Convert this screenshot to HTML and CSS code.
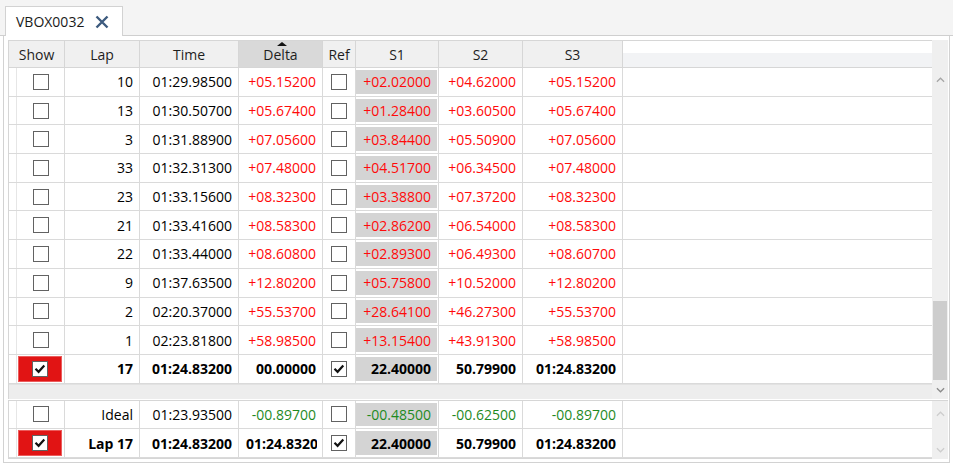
FILE: index.html
```html
<!DOCTYPE html>
<html lang="en">
<head>
    <meta charset="UTF-8">
    <meta name="viewport" content="width=device-width, initial-scale=1.0">
    <title>VBOX0032</title>
    <link rel="stylesheet" href="styles.css">
</head>
<body>
    <div class="tabstrip">
        <div class="tab">
            <span>VBOX0032</span>
            <svg class="tab-close" viewBox="0 0 14 14" width="14" height="14">
                <path d="M1.5 1.5 L12.5 12.5 M12.5 1.5 L1.5 12.5" stroke="#3d5a7e" stroke-width="2.4" fill="none"/>
            </svg>
        </div>
    </div>

    <div class="panel">
        <div class="section">
            <div class="grid">
                <div class="row head">
                    <div class="hcell">Show</div>
                    <div class="hcell">Lap</div>
                    <div class="hcell">Time</div>
                    <div class="hcell sorted">Delta<span class="sort-arrow"></span></div>
                    <div class="hcell">Ref</div>
                    <div class="hcell">S1</div>
                    <div class="hcell">S2</div>
                    <div class="hcell">S3</div>
                    <div class="hcell filler"></div>
                </div>

                <div class="row">
                    <div class="cell rh"></div>
                    <div class="cell center"><span class="cb"></span></div>
                    <div class="cell">10</div>
                    <div class="cell">01:29.98500</div>
                    <div class="cell red">+05.15200</div>
                    <div class="cell center"><span class="cb"></span></div>
                    <div class="cell s1"><span class="s1-box red">+02.02000</span></div>
                    <div class="cell red">+04.62000</div>
                    <div class="cell red">+05.15200</div>
                    <div class="cell filler"></div>
                </div>
                <div class="row">
                    <div class="cell rh"></div>
                    <div class="cell center"><span class="cb"></span></div>
                    <div class="cell">13</div>
                    <div class="cell">01:30.50700</div>
                    <div class="cell red">+05.67400</div>
                    <div class="cell center"><span class="cb"></span></div>
                    <div class="cell s1"><span class="s1-box red">+01.28400</span></div>
                    <div class="cell red">+03.60500</div>
                    <div class="cell red">+05.67400</div>
                    <div class="cell filler"></div>
                </div>
                <div class="row">
                    <div class="cell rh"></div>
                    <div class="cell center"><span class="cb"></span></div>
                    <div class="cell">3</div>
                    <div class="cell">01:31.88900</div>
                    <div class="cell red">+07.05600</div>
                    <div class="cell center"><span class="cb"></span></div>
                    <div class="cell s1"><span class="s1-box red">+03.84400</span></div>
                    <div class="cell red">+05.50900</div>
                    <div class="cell red">+07.05600</div>
                    <div class="cell filler"></div>
                </div>
                <div class="row">
                    <div class="cell rh"></div>
                    <div class="cell center"><span class="cb"></span></div>
                    <div class="cell">33</div>
                    <div class="cell">01:32.31300</div>
                    <div class="cell red">+07.48000</div>
                    <div class="cell center"><span class="cb"></span></div>
                    <div class="cell s1"><span class="s1-box red">+04.51700</span></div>
                    <div class="cell red">+06.34500</div>
                    <div class="cell red">+07.48000</div>
                    <div class="cell filler"></div>
                </div>
                <div class="row">
                    <div class="cell rh"></div>
                    <div class="cell center"><span class="cb"></span></div>
                    <div class="cell">23</div>
                    <div class="cell">01:33.15600</div>
                    <div class="cell red">+08.32300</div>
                    <div class="cell center"><span class="cb"></span></div>
                    <div class="cell s1"><span class="s1-box red">+03.38800</span></div>
                    <div class="cell red">+07.37200</div>
                    <div class="cell red">+08.32300</div>
                    <div class="cell filler"></div>
                </div>
                <div class="row">
                    <div class="cell rh"></div>
                    <div class="cell center"><span class="cb"></span></div>
                    <div class="cell">21</div>
                    <div class="cell">01:33.41600</div>
                    <div class="cell red">+08.58300</div>
                    <div class="cell center"><span class="cb"></span></div>
                    <div class="cell s1"><span class="s1-box red">+02.86200</span></div>
                    <div class="cell red">+06.54000</div>
                    <div class="cell red">+08.58300</div>
                    <div class="cell filler"></div>
                </div>
                <div class="row">
                    <div class="cell rh"></div>
                    <div class="cell center"><span class="cb"></span></div>
                    <div class="cell">22</div>
                    <div class="cell">01:33.44000</div>
                    <div class="cell red">+08.60800</div>
                    <div class="cell center"><span class="cb"></span></div>
                    <div class="cell s1"><span class="s1-box red">+02.89300</span></div>
                    <div class="cell red">+06.49300</div>
                    <div class="cell red">+08.60700</div>
                    <div class="cell filler"></div>
                </div>
                <div class="row">
                    <div class="cell rh"></div>
                    <div class="cell center"><span class="cb"></span></div>
                    <div class="cell">9</div>
                    <div class="cell">01:37.63500</div>
                    <div class="cell red">+12.80200</div>
                    <div class="cell center"><span class="cb"></span></div>
                    <div class="cell s1"><span class="s1-box red">+05.75800</span></div>
                    <div class="cell red">+10.52000</div>
                    <div class="cell red">+12.80200</div>
                    <div class="cell filler"></div>
                </div>
                <div class="row">
                    <div class="cell rh"></div>
                    <div class="cell center"><span class="cb"></span></div>
                    <div class="cell">2</div>
                    <div class="cell">02:20.37000</div>
                    <div class="cell red">+55.53700</div>
                    <div class="cell center"><span class="cb"></span></div>
                    <div class="cell s1"><span class="s1-box red">+28.64100</span></div>
                    <div class="cell red">+46.27300</div>
                    <div class="cell red">+55.53700</div>
                    <div class="cell filler"></div>
                </div>
                <div class="row">
                    <div class="cell rh"></div>
                    <div class="cell center"><span class="cb"></span></div>
                    <div class="cell">1</div>
                    <div class="cell">02:23.81800</div>
                    <div class="cell red">+58.98500</div>
                    <div class="cell center"><span class="cb"></span></div>
                    <div class="cell s1"><span class="s1-box red">+13.15400</span></div>
                    <div class="cell red">+43.91300</div>
                    <div class="cell red">+58.98500</div>
                    <div class="cell filler"></div>
                </div>
                <div class="row bold">
                    <div class="cell rh"></div>
                    <div class="cell center"><span class="show-on"><span class="cb checked"><svg viewBox="0 0 14 14"><path d="M2.5 6.8 L5.6 9.8 L11.3 3.6"/></svg></span></span></div>
                    <div class="cell">17</div>
                    <div class="cell">01:24.83200</div>
                    <div class="cell">00.00000</div>
                    <div class="cell center"><span class="cb checked"><svg viewBox="0 0 14 14"><path d="M2.5 6.8 L5.6 9.8 L11.3 3.6"/></svg></span></div>
                    <div class="cell s1"><span class="s1-box">22.40000</span></div>
                    <div class="cell">50.79900</div>
                    <div class="cell">01:24.83200</div>
                    <div class="cell filler"></div>
                </div>

                <div class="hscroll"></div>
            </div>

            <div class="vscroll">
                <svg class="arrow" viewBox="0 0 10 6"><path d="M1 5 L5 1 L9 5" stroke="#a6a6a6"/></svg>
                <div class="track"><div class="thumb"></div></div>
                <svg class="arrow" viewBox="0 0 10 6"><path d="M1 1 L5 5 L9 1" stroke="#8a8a8a"/></svg>
            </div>
        </div>

        <div class="section summary">
            <div class="grid">
                <div class="row">
                    <div class="cell rh"></div>
                    <div class="cell center"><span class="cb"></span></div>
                    <div class="cell">Ideal</div>
                    <div class="cell">01:23.93500</div>
                    <div class="cell green">-00.89700</div>
                    <div class="cell center"><span class="cb"></span></div>
                    <div class="cell s1"><span class="s1-box green">-00.48500</span></div>
                    <div class="cell green">-00.62500</div>
                    <div class="cell green">-00.89700</div>
                    <div class="cell filler"></div>
                </div>
                <div class="row bold">
                    <div class="cell rh"></div>
                    <div class="cell center"><span class="show-on"><span class="cb checked"><svg viewBox="0 0 14 14"><path d="M2.5 6.8 L5.6 9.8 L11.3 3.6"/></svg></span></span></div>
                    <div class="cell">Lap 17</div>
                    <div class="cell">01:24.83200</div>
                    <div class="cell clipped"><span>01:24.83200</span></div>
                    <div class="cell center"><span class="cb checked"><svg viewBox="0 0 14 14"><path d="M2.5 6.8 L5.6 9.8 L11.3 3.6"/></svg></span></div>
                    <div class="cell s1"><span class="s1-box">22.40000</span></div>
                    <div class="cell">50.79900</div>
                    <div class="cell">01:24.83200</div>
                    <div class="cell filler"></div>
                </div>
            </div>

            <div class="vscroll light">
                <svg class="arrow" viewBox="0 0 10 6"><path d="M1 5 L5 1 L9 5" stroke="#cdcdcd"/></svg>
                <div class="track"></div>
                <svg class="arrow" viewBox="0 0 10 6"><path d="M1 1 L5 5 L9 1" stroke="#cdcdcd"/></svg>
            </div>
        </div>
    </div>
</body>
</html>
```

FILE: styles.css
```css
body {
    margin: 0;
    font-family: "Open Sans", "Noto Sans", sans-serif;
    font-size: 14px;
    color: #000;
    background: #fff;
}

.tabstrip {
    height: 35px;
    padding-left: 5px;
    background: #f4f4f4;
    border-bottom: 1px solid #cfcfcf;
    display: flex;
    align-items: flex-end;
}

.tab {
    height: 29px;
    margin-bottom: -1px;
    padding: 0 13px 0 10px;
    display: flex;
    align-items: center;
    gap: 11px;
    background: #fff;
    border: 1px solid #d2d2d2;
    border-bottom: none;
    color: #1a1a1a;
}

.tab-close {
    display: block;
    margin-top: 1px;
}

.panel {
    margin: 0 3px;
    padding: 4px 1px 3px 4px;
    border: 1px solid #d2d2d2;
    border-top: none;
}

.section {
    display: flex;
}

.grid {
    flex: 1;
    border-left: 1px solid #d6d6d6;
}

.row {
    display: grid;
    grid-template-columns: 8px 48px 75px 99px 84px 33px 83px 84px 100px 1fr;
    height: 28.7px;
    box-sizing: border-box;
    border-bottom: 1px solid #dadada;
}

.row.head {
    grid-template-columns: 56px 75px 99px 84px 33px 83px 84px 100px 1fr;
    height: 28px;
    border-top: 1px solid #d6d6d6;
    border-bottom: 1px solid #d6d6d6;
    background: #f0f0f0;
}

.hcell {
    position: relative;
    display: flex;
    align-items: center;
    justify-content: center;
    border-right: 1px solid #d6d6d6;
    color: #1e1e1e;
}

.hcell.sorted {
    background: #d9d9d9;
}

.sort-arrow {
    position: absolute;
    top: 1px;
    left: 50%;
    margin-left: -4px;
    border-left: 5px solid transparent;
    border-right: 5px solid transparent;
    border-bottom: 4px solid #111;
}

.hcell.filler {
    border-right: none;
    background: linear-gradient(#fff 0, #fff 12px, #f2f3f5 12px);
}

.cell {
    display: flex;
    align-items: center;
    justify-content: flex-end;
    padding-right: 6px;
    border-right: 1px solid #dadada;
    white-space: nowrap;
    overflow: hidden;
}

.cell.rh {
    padding: 0;
    border-right: 1px solid #e6e6e6;
}

.cell.center {
    justify-content: center;
    padding: 0;
}

.cell.filler {
    border-right: none;
    padding: 0;
}

.cell.s1 {
    padding: 2px 1px 2px 0;
    align-items: stretch;
}

.s1-box {
    flex: 1;
    display: flex;
    align-items: center;
    justify-content: flex-end;
    padding-right: 6px;
    background: #d4d4d4;
}

.red {
    color: #ff0a0a;
}

.green {
    color: #1f8a1f;
}

.bold {
    font-weight: bold;
}

.cell.clipped {
    justify-content: flex-start;
    padding: 0 5px 0 7px;
}

.cell.clipped span {
    overflow: hidden;
}

.cb {
    width: 16px;
    height: 16px;
    box-sizing: border-box;
    border: 1px solid #626262;
    background: #fff;
    display: flex;
    align-items: center;
    justify-content: center;
}

.cb svg {
    width: 14px;
    height: 14px;
}

.cb svg path {
    fill: none;
    stroke: #111;
    stroke-width: 2.2;
}

.show-on {
    align-self: stretch;
    flex: 1;
    margin: 1px 2px 1px 1px;
    display: flex;
    align-items: center;
    justify-content: center;
    background: #e11414;
    border: 1px solid #ec5c5c;
}

.hscroll {
    height: 15px;
    background: #ededed;
    border-top: 1px solid #e2e2e2;
    box-sizing: border-box;
}

.vscroll {
    width: 16px;
    background: #efefef;
    display: flex;
    flex-direction: column;
    align-items: center;
}

.vscroll .arrow {
    width: 9px;
    height: 6px;
    margin: 37px 0 0;
}

.vscroll .arrow path {
    fill: none;
    stroke-width: 1.4;
}

.vscroll .arrow:last-child {
    margin: 4px 0 6px;
}

.vscroll .track {
    flex: 1;
    width: 100%;
    display: flex;
    flex-direction: column;
    justify-content: flex-end;
    padding-bottom: 3px;
}

.thumb {
    height: 79px;
    margin: 0 1px;
    background: #cdcdcd;
}

.summary {
    border-top: 1px solid #d6d6d6;
    margin-top: 1px;
}

.summary .grid {
    border-bottom: 1px solid #d6d6d6;
}

.vscroll.light .arrow {
    margin-top: 10px;
}

.vscroll.light .arrow:last-child {
    margin: 0 0 6px;
}
```
